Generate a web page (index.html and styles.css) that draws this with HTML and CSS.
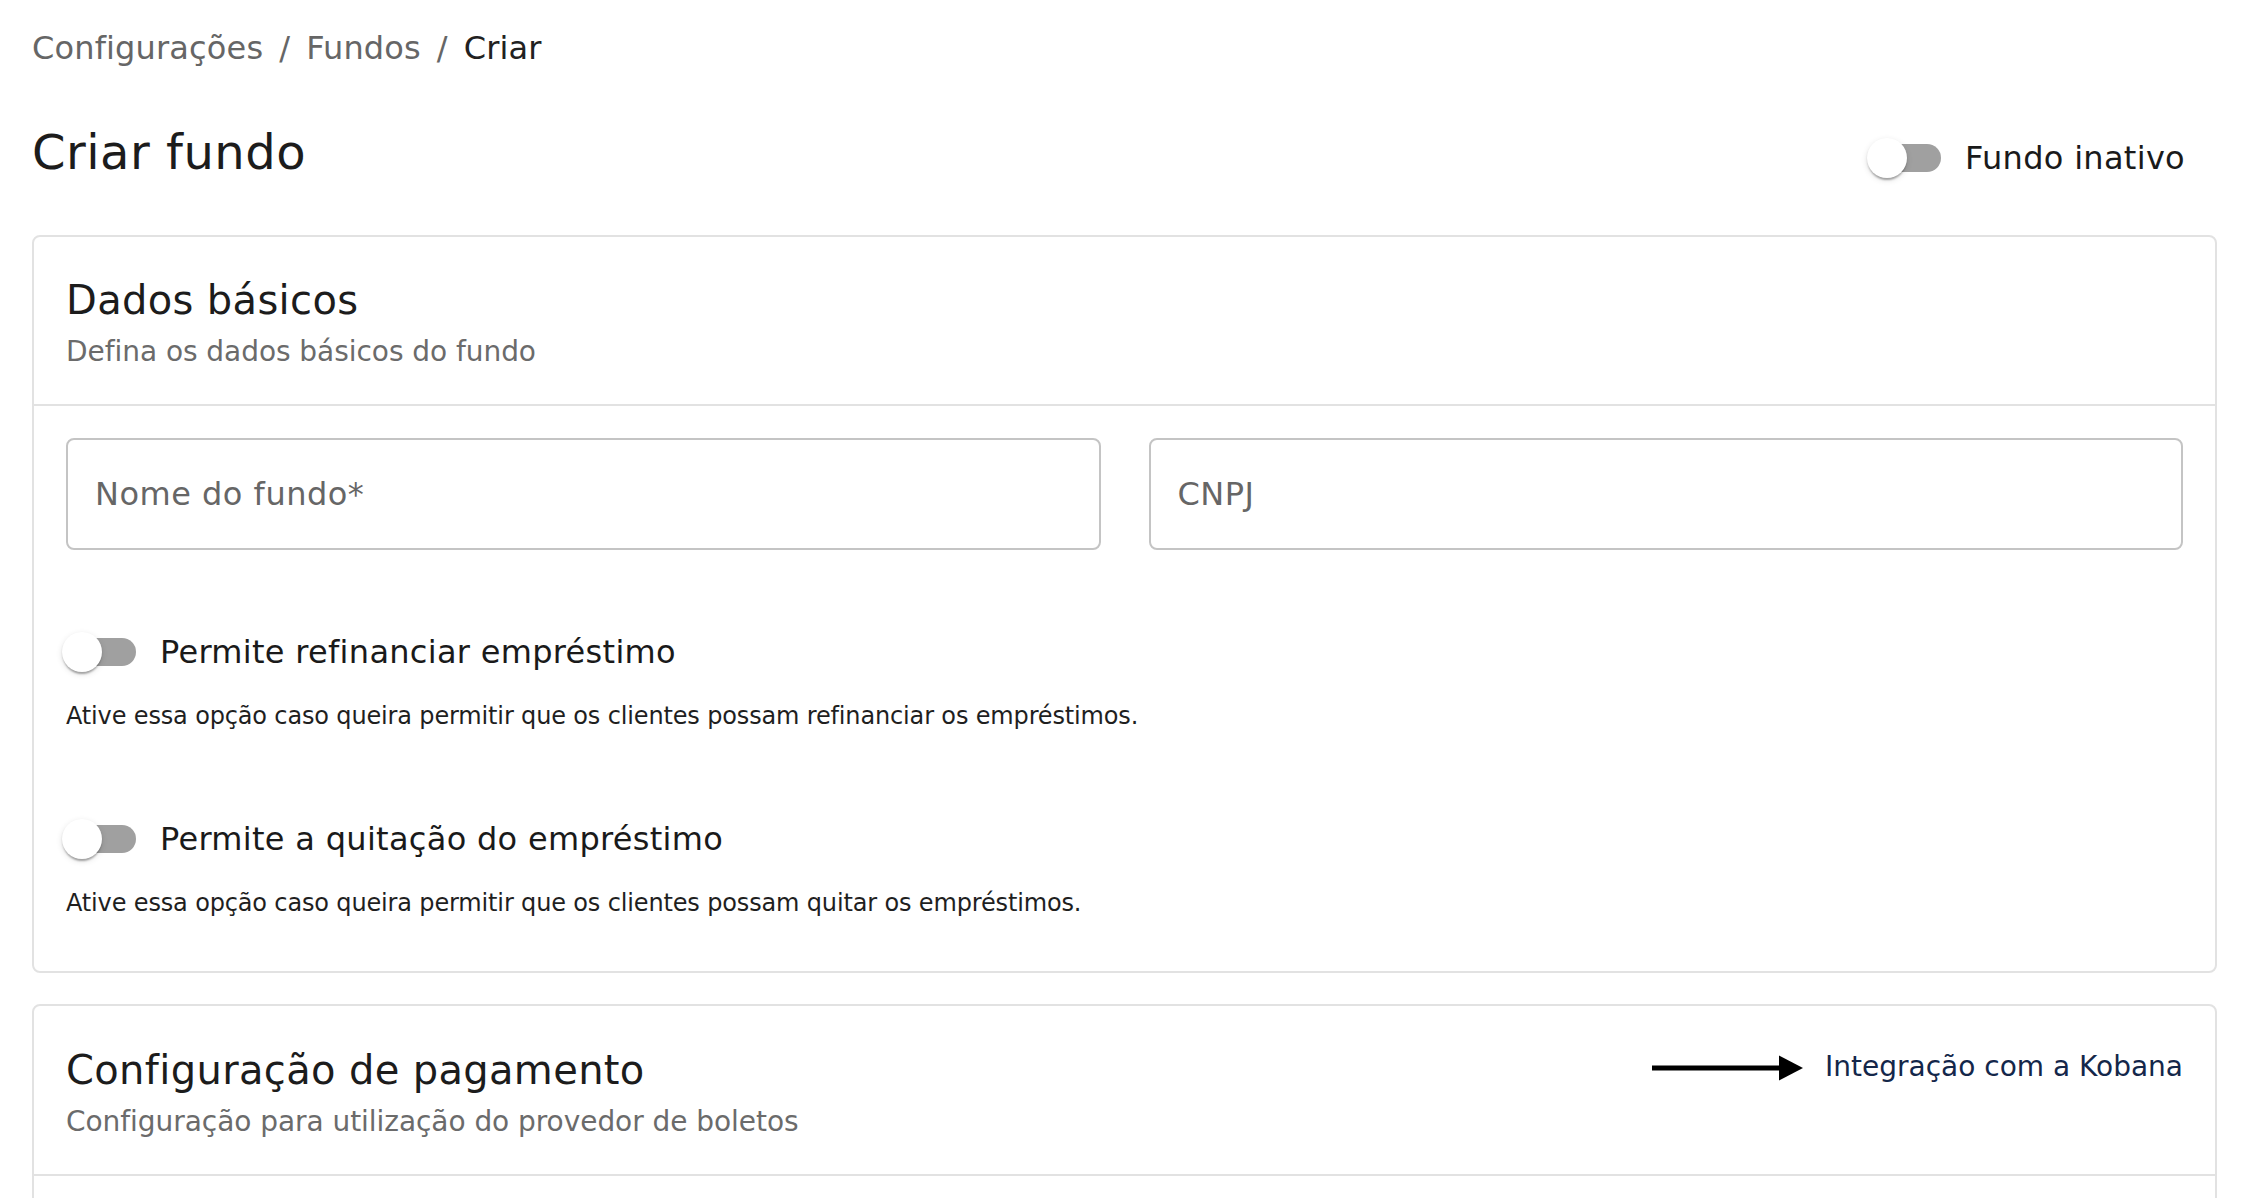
FILE: index.html
```html
<!DOCTYPE html>
<html lang="pt-BR">
<head>
<meta charset="utf-8">
<title>Criar fundo</title>
<link rel="stylesheet" href="styles.css">
</head>
<body>
<div class="page">
  <nav class="breadcrumbs">
    <span class="crumb">Configurações</span><span class="sep">/</span><span class="crumb">Fundos</span><span class="sep">/</span><span class="crumb current">Criar</span>
  </nav>

  <div class="page-header">
    <h1 class="page-title">Criar fundo</h1>
    <label class="switch-label top-switch">
      <span class="switch"><span class="track"></span><span class="thumb"></span></span>
      <span class="switch-text">Fundo inativo</span>
    </label>
  </div>

  <section class="card">
    <div class="card-header">
      <div class="card-heading">
        <h2 class="card-title">Dados básicos</h2>
        <p class="card-subtitle">Defina os dados básicos do fundo</p>
      </div>
    </div>
    <div class="card-content">
      <div class="fields">
        <div class="field"><span class="placeholder">Nome do fundo*</span></div>
        <div class="field"><span class="placeholder">CNPJ</span></div>
      </div>

      <div class="option">
        <label class="switch-label">
          <span class="switch"><span class="track"></span><span class="thumb"></span></span>
          <span class="switch-text">Permite refinanciar empréstimo</span>
        </label>
        <p class="helper">Ative essa opção caso queira permitir que os clientes possam refinanciar os empréstimos.</p>
      </div>

      <div class="option">
        <label class="switch-label">
          <span class="switch"><span class="track"></span><span class="thumb"></span></span>
          <span class="switch-text">Permite a quitação do empréstimo</span>
        </label>
        <p class="helper">Ative essa opção caso queira permitir que os clientes possam quitar os empréstimos.</p>
      </div>
    </div>
  </section>

  <section class="card">
    <div class="card-header second">
      <div class="card-heading">
        <h2 class="card-title">Configuração de pagamento</h2>
        <p class="card-subtitle">Configuração para utilização do provedor de boletos</p>
      </div>
      <div class="card-action">
        <svg class="arrow" width="152" height="28" viewBox="0 0 152 28" aria-hidden="true">
          <line x1="0" y1="15" x2="130" y2="15" stroke="#000" stroke-width="5"/>
          <polygon points="127,2.5 151,15 127,27.5" fill="#000"/>
        </svg>
        <a class="link" href="#">Integração com a Kobana</a>
      </div>
    </div>
    <div class="card-content tall"></div>
  </section>
</div>
</body>
</html>
```

FILE: styles.css
```css
* { box-sizing: border-box; }

html, body {
  margin: 0;
  padding: 0;
  background: #ffffff;
}

body {
  font-family: "DejaVu Sans", "Liberation Sans", sans-serif;
  color: #212121;
}

.page {
  padding: 24px 39px 0 32px;
}

/* Breadcrumbs */
.breadcrumbs {
  display: flex;
  align-items: center;
  font-size: 32px;
  line-height: 48px;
  letter-spacing: 0.15px;
  color: #666666;
}
.sep {
  margin: 0 16px;
  color: #666666;
}
.crumb.current {
  color: #212121;
}

/* Header */
.page-header {
  display: flex;
  justify-content: space-between;
  align-items: flex-start;
  margin-top: 48px;
  margin-bottom: 39px;
}
.page-title {
  margin: 0;
  font-size: 48px;
  line-height: 64px;
  font-weight: 400;
  letter-spacing: 0.5px;
  color: #1c1c1c;
}

/* Switch */
.switch-label {
  display: flex;
  align-items: center;
  margin-left: -22px;
  cursor: pointer;
}
.top-switch {
  margin-left: 0;
  margin-right: 32px;
}
.switch {
  display: grid;
  width: 116px;
  height: 76px;
  align-items: center;
  flex: none;
}
.track {
  grid-area: 1 / 1;
  margin-left: 24px;
  width: 68px;
  height: 28px;
  border-radius: 14px;
  background: #a0a0a0;
}
.thumb {
  grid-area: 1 / 1;
  margin-left: 18px;
  width: 40px;
  height: 40px;
  border-radius: 50%;
  background: #ffffff;
  box-shadow: 0 4px 2px -2px rgba(0,0,0,0.2), 0 2px 2px 0 rgba(0,0,0,0.14), 0 2px 6px 0 rgba(0,0,0,0.12);
}
.switch-text {
  font-size: 32px;
  line-height: 48px;
  letter-spacing: 0.3px;
  color: #1a1a1a;
}

/* Cards */
.card {
  border: 2px solid #e2e2e2;
  border-radius: 8px;
  background: #ffffff;
  margin-bottom: 31px;
}
.card-header {
  display: flex;
  justify-content: space-between;
  align-items: flex-start;
  padding: 31px 32px 32px;
  border-bottom: 2px solid #e2e2e2;
}
.card-header.second {
  padding-top: 32px;
}
.card-title {
  margin: 0;
  font-size: 40px;
  line-height: 64px;
  font-weight: 400;
  letter-spacing: 0.35px;
  color: #1c1c1c;
}
.card-subtitle {
  margin: 0;
  font-size: 28px;
  line-height: 40px;
  letter-spacing: -0.05px;
  color: #6b6b6b;
}
.card-action {
  display: flex;
  align-items: center;
  height: 58px;
  gap: 21px;
}
.arrow {
  display: block;
}
.link {
  font-size: 28px;
  line-height: 40px;
  color: #14274a;
  text-decoration: none;
}

.card-content {
  padding: 32px 32px 48px;
}
.card-content.tall {
  min-height: 300px;
}

.fields {
  display: grid;
  grid-template-columns: 1fr 1fr;
  gap: 48px;
}
.field {
  height: 112px;
  border: 2px solid #c4c4c4;
  border-radius: 8px;
  display: flex;
  align-items: center;
  padding-left: 27px;
}
.placeholder {
  font-size: 32px;
  letter-spacing: 0.5px;
  color: #666666;
}

.option {
  margin-top: 64px;
}
.option + .option {
  margin-top: 65px;
}
.helper {
  margin: 6px 0 0;
  font-size: 24px;
  line-height: 40px;
  letter-spacing: -0.15px;
  color: #1f1f1f;
}
```
